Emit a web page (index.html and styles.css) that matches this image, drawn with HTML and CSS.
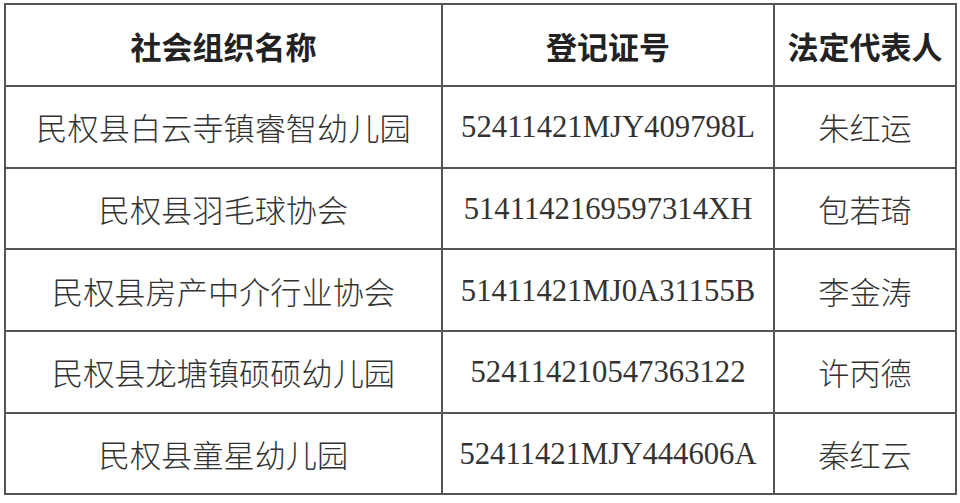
FILE: index.html
```html
<!DOCTYPE html>
<html lang="zh-CN">
<head>
<meta charset="utf-8">
<link rel="stylesheet" href="styles.css">
</head>
<body>
<table class="reg">
  <colgroup>
    <col class="c-name">
    <col class="c-code">
    <col class="c-rep">
  </colgroup>
  <thead>
    <tr>
      <th>社会组织名称</th>
      <th>登记证号</th>
      <th>法定代表人</th>
    </tr>
  </thead>
  <tbody>
    <tr><td class="cn">民权县白云寺镇睿智幼儿园</td><td class="code">52411421MJY409798L</td><td class="cn">朱红运</td></tr>
    <tr><td class="cn">民权县羽毛球协会</td><td class="code">5141142169597314XH</td><td class="cn">包若琦</td></tr>
    <tr><td class="cn">民权县房产中介行业协会</td><td class="code">51411421MJ0A31155B</td><td class="cn">李金涛</td></tr>
    <tr><td class="cn">民权县龙塘镇硕硕幼儿园</td><td class="code">524114210547363122</td><td class="cn">许丙德</td></tr>
    <tr><td class="cn">民权县童星幼儿园</td><td class="code">52411421MJY444606A</td><td class="cn">秦红云</td></tr>
  </tbody>
</table>
</body>
</html>
```

FILE: styles.css
```css
html, body {
  margin: 0;
  padding: 0;
  background: #ffffff;
}

body {
  padding: 3px 0 0 4px;
}

.reg {
  border-collapse: collapse;
  table-layout: fixed;
  width: 951px;
}

.c-name { width: 437px; }
.c-code { width: 332px; }
.c-rep { width: 182px; }

.reg th,
.reg td {
  border: 2px solid #555555;
  height: 79.7px;
  padding: 0;
  text-align: center;
  vertical-align: middle;
  white-space: nowrap;
}

.reg th {
  font-family: "Noto Sans CJK SC", "Noto Sans", sans-serif;
  font-weight: 700;
  font-size: 31px;
  color: #222222;
  height: 80px;
}

.reg td.cn {
  font-family: "Noto Sans CJK SC", "Noto Sans", sans-serif;
  font-weight: 300;
  font-size: 31.2px;
  color: #333333;
}

.reg td.code {
  font-family: "Liberation Serif", "Times New Roman", serif;
  font-size: 30.7px;
  color: #333333;
  height: 77.7px;
  padding-top: 2px;
}
```
